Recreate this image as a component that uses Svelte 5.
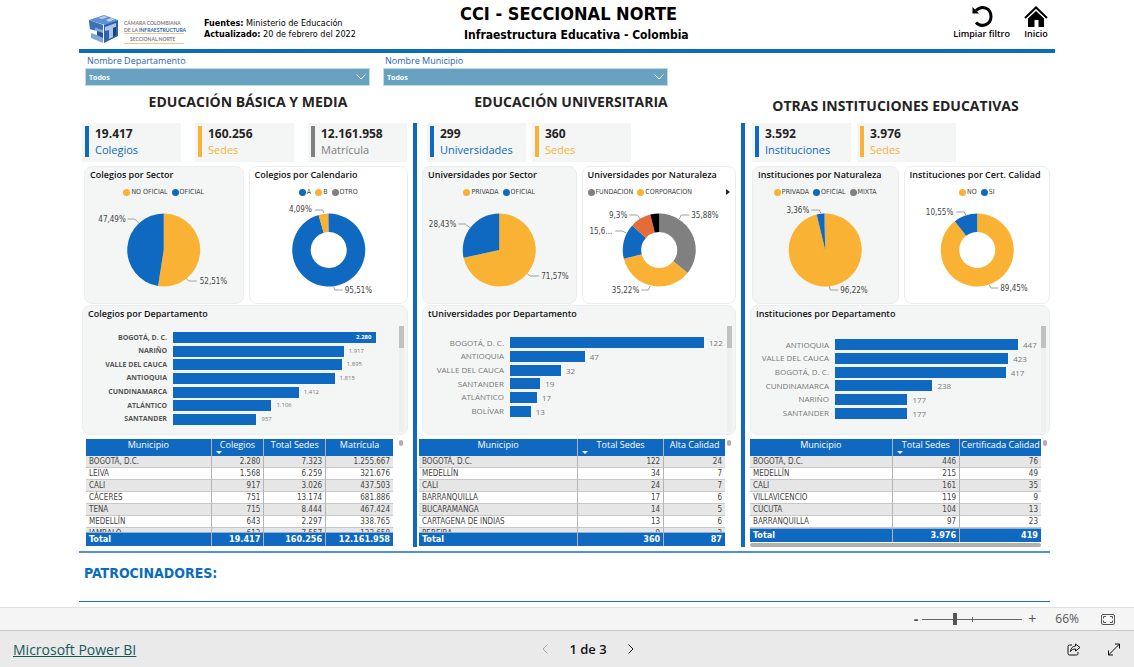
<script lang="ts">
  // Single report page: three education levels side by side, each with
  // its KPIs, two share charts, a department ranking and a town table.

  type Slice = { name: string; value: number; color: string };
  type Callout = { text: string; x: number; y: number; side: 'left' | 'right'; line: string };
  type Share = {
    title: string;
    donut: boolean;
    slices: Slice[];
    legend: number;
    callouts: Callout[];
  };

  const BLUE = '#0f69c0';
  const GOLD = '#f9b233';
  const GRAY = '#808080';

  // Town rows that fit the table before the total covers the next one.
  const FULL_ROWS = 6;

  const filters = [
    { id: 'departamento', label: 'Nombre Departamento' },
    { id: 'municipio', label: 'Nombre Municipio' },
  ];

  const sections = [
    {
      id: 'basica',
      title: 'EDUCACIÓN BÁSICA Y MEDIA',
      kpis: [
        { value: '19.417', label: 'Colegios', color: BLUE },
        { value: '160.256', label: 'Sedes', color: GOLD },
        { value: '12.161.958', label: 'Matrícula', color: GRAY },
      ],
      shares: [
        {
          title: 'Colegios por Sector',
          donut: false,
          legend: 2,
          slices: [
            { name: 'NO OFICIAL', value: 52.51, color: GOLD },
            { name: 'OFICIAL', value: 47.49, color: BLUE },
          ],
          callouts: [
            { text: '47,49%', x: -38, y: -31, side: 'left', line: '-36,-31 -29,-31 -25,-27' },
            { text: '52,51%', x: 36, y: 31, side: 'right', line: '22,28 25,31 33,31' },
          ],
        },
        {
          title: 'Colegios por Calendario',
          donut: true,
          legend: 3,
          slices: [
            { name: 'A', value: 95.51, color: BLUE },
            { name: 'B', value: 4.09, color: GOLD },
            { name: 'OTRO', value: 0.4, color: GRAY },
          ],
          callouts: [
            { text: '4,09%', x: -17, y: -41, side: 'left', line: '-14,-40 -6,-40 -5,-37' },
            { text: '95,51%', x: 16, y: 40, side: 'right', line: '5,37 6,40 14,40' },
          ],
        },
      ] as Share[],
      ranking: {
        title: 'Colegios por Departamento',
        rows: [
          ['BOGOTÁ, D. C.', 2280, '2.280'],
          ['NARIÑO', 1917, '1.917'],
          ['VALLE DEL CAUCA', 1895, '1.895'],
          ['ANTIOQUIA', 1815, '1.815'],
          ['CUNDINAMARCA', 1412, '1.412'],
          ['ATLÁNTICO', 1106, '1.106'],
          ['SANTANDER', 937, '937'],
        ] as [string, number, string][],
      },
      table: {
        head: ['Municipio', 'Colegios', 'Total Sedes', 'Matrícula'],
        widths: [41, 17, 20, 22],
        rows: [
          ['BOGOTÁ, D.C.', '2.280', '7.323', '1.255.667'],
          ['LEIVA', '1.568', '6.259', '321.676'],
          ['CALI', '917', '3.026', '437.503'],
          ['CÁCERES', '751', '13.174', '681.886'],
          ['TENA', '715', '8.444', '467.424'],
          ['MEDELLÍN', '643', '2.297', '338.765'],
          ['JAMBALÓ', '613', '7.557', '133.658'],
        ],
        total: ['Total', '19.417', '160.256', '12.161.958'],
      },
    },
    {
      id: 'universitaria',
      title: 'EDUCACIÓN UNIVERSITARIA',
      kpis: [
        { value: '299', label: 'Universidades', color: BLUE },
        { value: '360', label: 'Sedes', color: GOLD },
      ],
      shares: [
        {
          title: 'Universidades por Sector',
          donut: false,
          legend: 2,
          slices: [
            { name: 'PRIVADA', value: 71.57, color: GOLD },
            { name: 'OFICIAL', value: 28.43, color: BLUE },
          ],
          callouts: [
            { text: '28,43%', x: -43, y: -26, side: 'left', line: '-41,-26 -34,-26 -29,-22' },
            { text: '71,57%', x: 42, y: 26, side: 'right', line: '28,24 31,26 40,26' },
          ],
        },
        {
          title: 'Universidades por Naturaleza',
          donut: true,
          legend: 2,
          slices: [
            { name: 'FUNDACION', value: 35.88, color: GRAY },
            { name: 'CORPORACION', value: 35.22, color: GOLD },
            { name: 'NACIONAL', value: 15.65, color: BLUE },
            { name: 'DEPARTAMENTAL', value: 9.3, color: '#e66c37' },
            { name: 'MUNICIPAL', value: 3.95, color: '#000' },
          ],
          callouts: [
            { text: '9,3%', x: -32, y: -35, side: 'left', line: '-30,-35 -22,-35 -19,-31' },
            { text: '15,6...', x: -47, y: -19, side: 'left', line: '-44,-19 -37,-19 -33,-17' },
            { text: '35,88%', x: 32, y: -35, side: 'right', line: '20,-31 22,-35 30,-35' },
            { text: '35,22%', x: -20, y: 40, side: 'left', line: '-18,40 -11,40 -9,36' },
          ],
        },
      ] as Share[],
      ranking: {
        title: 'tUniversidades por Departamento',
        rows: [
          ['BOGOTÁ, D. C.', 122, '122'],
          ['ANTIOQUIA', 47, '47'],
          ['VALLE DEL CAUCA', 32, '32'],
          ['SANTANDER', 19, '19'],
          ['ATLÁNTICO', 17, '17'],
          ['BOLÍVAR', 13, '13'],
        ] as [string, number, string][],
      },
      table: {
        head: ['Municipio', 'Total Sedes', 'Alta Calidad'],
        widths: [52, 28, 20],
        rows: [
          ['BOGOTÁ, D.C.', '122', '24'],
          ['MEDELLÍN', '34', '7'],
          ['CALI', '24', '7'],
          ['BARRANQUILLA', '17', '6'],
          ['BUCARAMANGA', '14', '5'],
          ['CARTAGENA DE INDIAS', '13', '6'],
          ['PEREIRA', '9', '3'],
        ],
        total: ['Total', '360', '87'],
      },
    },
    {
      id: 'otras',
      title: 'OTRAS INSTITUCIONES EDUCATIVAS',
      kpis: [
        { value: '3.592', label: 'Instituciones', color: BLUE },
        { value: '3.976', label: 'Sedes', color: GOLD },
      ],
      shares: [
        {
          title: 'Instituciones por Naturaleza',
          donut: false,
          legend: 3,
          slices: [
            { name: 'PRIVADA', value: 96.22, color: GOLD },
            { name: 'OFICIAL', value: 3.36, color: BLUE },
            { name: 'MIXTA', value: 0.42, color: GRAY },
          ],
          callouts: [
            { text: '3,36%', x: -16, y: -40, side: 'left', line: '-14,-40 -6,-40 -4,-36' },
            { text: '96,22%', x: 15, y: 40, side: 'right', line: '4,36 5,40 13,40' },
          ],
        },
        {
          title: 'Instituciones por Cert. Calidad',
          donut: true,
          legend: 2,
          slices: [
            { name: 'NO', value: 89.45, color: GOLD },
            { name: 'SI', value: 10.55, color: BLUE },
          ],
          callouts: [
            { text: '10,55%', x: -24, y: -38, side: 'left', line: '-21,-38 -13,-38 -11,-34' },
            { text: '89,45%', x: 23, y: 38, side: 'right', line: '12,35 14,38 21,38' },
          ],
        },
      ] as Share[],
      ranking: {
        title: 'Instituciones por Departamento',
        rows: [
          ['ANTIOQUIA', 447, '447'],
          ['VALLE DEL CAUCA', 423, '423'],
          ['BOGOTÁ, D. C.', 417, '417'],
          ['CUNDINAMARCA', 238, '238'],
          ['NARIÑO', 177, '177'],
          ['SANTANDER', 177, '177'],
        ] as [string, number, string][],
      },
      table: {
        head: ['Municipio', 'Total Sedes', 'Certificada Calidad'],
        widths: [49, 23, 28],
        rows: [
          ['BOGOTÁ, D.C.', '446', '76'],
          ['MEDELLÍN', '215', '49'],
          ['CALI', '161', '35'],
          ['VILLAVICENCIO', '119', '9'],
          ['CÚCUTA', '104', '13'],
          ['BARRANQUILLA', '97', '23'],
        ],
        total: ['Total', '3.976', '419'],
      },
    },
  ];

  let zoom = $state(66);
  let page = $state(1);

  // Clockwise wedges from twelve o'clock, with a hole when inner > 0.
  function wedges(share: Share) {
    const outer = 36.5;
    const inner = share.donut ? 18 : 0;
    const point = (r: number, turn: number) => {
      const a = turn * 2 * Math.PI;
      return `${(r * Math.sin(a)).toFixed(2)} ${(-r * Math.cos(a)).toFixed(2)}`;
    };
    let from = 0;
    return share.slices.map((s) => {
      const to = from + s.value / 100;
      const large = to - from > 0.5 ? 1 : 0;
      const d =
        `M${point(outer, from)}A${outer} ${outer} 0 ${large} 1 ${point(outer, to)}` +
        (inner
          ? `L${point(inner, to)}A${inner} ${inner} 0 ${large} 0 ${point(inner, from)}Z`
          : 'L0 0Z');
      from = to;
      return { d, color: s.color };
    });
  }
</script>

<div class="viewer">
  <main class="report">
    <header class="header">
      <svg class="logo" viewBox="0 0 98 32" role="img" aria-label="Cámara Colombiana de la Infraestructura">
        <path d="M1 6 16 1l14 5-13 5z" fill="#5f90d2" />
        <path d="M1 6l14 5v18L3 24v-5l6 2v-4l-7-2z" fill="#7ea8dd" />
        <path d="M1 6l14 5v5L7 13.500v3L2 15z" fill="#3c70b8" />
        <path d="M16 11 30 6v16l-14 7z" fill="#2f62ab" />
        <path d="M17 13l11-4v4l-3 1v9l-4 2v-9l-4 1z" fill="#a9c6ea" />
        <path d="M25 14l3-1v8l-3 2z" fill="#1d437c" />
        <path d="M10 4l6-2 4 1-6 2zM18 6l5-2 4 1-6 3z" fill="#b9d1ee" />
        <path d="M9 17l6 2v5l-6-3z" fill="#24549b" />
        <path d="M36 19.500h60M36 29.500h60" stroke="#f0c78a" />
        <text x="36" y="11" fill="#7d8083">CÁMARA COLOMBIANA</text>
        <text x="36" y="18" fill="#7d8083">DE LA <tspan fill="#1f65b3">INFRAESTRUCTURA</tspan></text>
        <text x="42" y="27" fill="#7d8083">SECCIONAL NORTE</text>
      </svg>
      <p class="sources">
        <b>Fuentes:</b> Ministerio de Educación<br />
        <b>Actualizado:</b> 20 de febrero del 2022
      </p>
      <div class="heading">
        <h1>CCI - SECCIONAL NORTE</h1>
        <p>Infraestructura Educativa - Colombia</p>
      </div>
      <nav class="actions">
        <button type="button">
          <svg width="22" height="23" viewBox="0 0 22 23" fill="none">
            <path d="M5 5.500C11-.5 20 3 20 11.500c0 8.500-10 11.500-15 6" stroke="#000" stroke-width="3" />
            <path d="M1.500 2v6.500H8z" fill="#000" />
          </svg>
          Limpiar filtro
        </button>
        <button type="button">
          <svg width="24" height="23" viewBox="0 0 24 23">
            <path d="M1 13 12 2.500 23 13" fill="none" stroke="#000" stroke-width="2" />
            <path d="M4 13.500 12 6l8 7.500V22h-5.500v-7h-4v7H4z" />
          </svg>
          Inicio
        </button>
      </nav>
    </header>

    <form class="filters">
      {#each filters as filter}
        <div class="filter">
          <label for={filter.id}>{filter.label}</label>
          <div class="filter__box">
            <select id={filter.id}><option>Todos</option></select>
            <svg width="10" height="6" viewBox="0 0 10 6"><path d="M.5.5 5 5 9.500.5" /></svg>
          </div>
        </div>
      {/each}
    </form>

    <div class="columns">
      {#each sections as section}
        {@const max = section.ranking.rows[0][1]}
        <section class="column column--{section.id}">
          <h2>{section.title}</h2>
          <div class="column__body">
            <div class="kpis">
              {#each section.kpis as kpi}
                <div class="kpi" style="--accent: {kpi.color}">
                  <strong>{kpi.value}</strong>
                  <span>{kpi.label}</span>
                </div>
              {/each}
            </div>

            <div class="shares">
              {#each section.shares as share}
                <article class="card share" class:share--plain={share.donut}>
                  <h3>{share.title}</h3>
                  <ul class="legend">
                    {#each share.slices.slice(0, share.legend) as slice}
                      <li style="--dot: {slice.color}">{slice.name}</li>
                    {/each}
                    {#if share.legend < share.slices.length}
                      <li class="legend__more"><button type="button" aria-label="Siguiente"></button></li>
                    {/if}
                  </ul>
                  <svg class="pie" viewBox="-60 -50 120 100">
                    {#each wedges(share) as wedge}
                      <path d={wedge.d} fill={wedge.color} />
                    {/each}
                    {#each share.callouts as c}
                      <polyline points={c.line} />
                      <text x={c.x} y={c.y + 3} text-anchor={c.side === 'left' ? 'end' : 'start'}>{c.text}</text>
                    {/each}
                  </svg>
                </article>
              {/each}
            </div>

            <article class="card ranking">
              <h3>{section.ranking.title}</h3>
              <div class="ranking__plot">
                <ol>
                  {#each section.ranking.rows as [name, value, text], i}
                    <li>
                      <span class="ranking__name">{name}</span>
                      <span class="ranking__track">
                        <span class="ranking__bar" style="width: {(value / max) * 100}%"></span>
                        <span class="ranking__value" class:ranking__value--first={i === 0}>{text}</span>
                      </span>
                    </li>
                  {/each}
                </ol>
                <div class="scroll"></div>
              </div>
            </article>

            <div class="towns">
              <div class="towns__main">
                <table>
                  <thead>
                    <tr>
                      {#each section.table.head as name, i}
                        <th style="width: {section.table.widths[i]}%" class:sorted={i === 1}>{name}</th>
                      {/each}
                    </tr>
                  </thead>
                  <tbody>
                    {#each section.table.rows as row, i}
                      <tr class:partial={i >= FULL_ROWS}>
                        {#each row as cell}<td><div>{cell}</div></td>{/each}
                      </tr>
                    {/each}
                  </tbody>
                  <tfoot>
                    <tr>{#each section.table.total as cell}<td>{cell}</td>{/each}</tr>
                  </tfoot>
                </table>
                {#if section.id === 'otras'}<div class="towns__hscroll"></div>{/if}
              </div>
              <div class="towns__vscroll"></div>
            </div>
          </div>
        </section>
      {/each}
    </div>

    <section class="sponsors"><h2>PATROCINADORES:</h2></section>
  </main>

  <div class="zoombar">
    <button type="button" aria-label="Alejar" onclick={() => (zoom -= 10)}><b>-</b></button>
    <div class="zoombar__slider">
      <input type="range" min="10" max="185" aria-label="Zoom" bind:value={zoom} />
    </div>
    <button type="button" aria-label="Acercar" onclick={() => (zoom += 10)}>+</button>
    <output>{zoom}%</output>
    <button type="button" aria-label="Ajustar a la página">
      <svg width="14" height="11" viewBox="0 0 14 11" fill="none" stroke="#555">
        <rect x=".5" y=".5" width="13" height="10" rx="1.500" />
        <path d="M2.500 4.500v-2H5M9 2.500h2.500v2M11.500 6.500v2H9M5 8.500H2.500v-2" />
      </svg>
    </button>
  </div>

  <footer class="statusbar">
    <a href="https://powerbi.microsoft.com">Microsoft Power BI</a>
    <div class="pager">
      <button type="button" aria-label="Página anterior" disabled={page === 1} onclick={() => page--}>
        <svg width="8" height="12" viewBox="0 0 8 12"><path d="M6.500 1.500 2 6l4.500 4.500" /></svg>
      </button>
      <span>{page} de 3</span>
      <button type="button" aria-label="Página siguiente" disabled={page === 3} onclick={() => page++}>
        <svg width="8" height="12" viewBox="0 0 8 12"><path d="M1.500 1.500 6 6l-4.500 4.500" /></svg>
      </button>
    </div>
    <div class="statusbar__tools">
      <button type="button" aria-label="Compartir">
        <svg width="14" height="13" viewBox="0 0 14 13">
          <path d="M5 2H2.500Q1 2 1 3.500v7Q1 12 2.500 12h7q1.500 0 1.500-1.500V9" />
          <path d="M8.500 1 13 4.500 8.500 8V6C6 6 5 6.500 3.500 8.500 4 5 5.500 3.200 8.500 3z" />
        </svg>
      </button>
      <button type="button" aria-label="Pantalla completa">
        <svg width="14" height="13" viewBox="0 0 14 13">
          <path d="M1.500 12 12.500 1M8 1h4.500v4.500M1.500 7.500V12H6" />
        </svg>
      </button>
    </div>
  </footer>
</div>

<style>
  :global(body) {
    background: #fff;
  }

  .viewer {
    --ui: 'Open Sans', 'Noto Sans', sans-serif;
    --tahoma: 'DejaVu Sans Condensed', 'DejaVu Sans', sans-serif;
    --blue: #0f69c0;
    display: flex;
    flex-direction: column;
    min-height: 100vh;
    font-family: var(--ui);
    color: #252423;
  }

  h1,
  h2,
  h3,
  p,
  ul,
  ol {
    margin: 0;
    padding: 0;
    list-style: none;
  }

  button {
    padding: 0;
    border: 0;
    background: none;
    color: inherit;
    font: inherit;
    cursor: pointer;
  }

  .report {
    flex: 1;
    padding: 0 79px;
  }

  /* header */
  .header {
    display: grid;
    grid-template-columns: 116px 256px 1fr auto;
    align-items: start;
    box-sizing: border-box;
    height: 53px;
    padding: 3px 7px 0 9px;
    border-bottom: 4px solid #0b6cba;
  }

  .logo {
    width: 98px;
    height: 32px;
    margin-top: 11px;
    overflow: visible;
  }
  .logo text {
    font: bold 5px Lato, sans-serif;
  }

  .sources {
    margin-top: 15px;
    font: 9px/11px var(--tahoma);
    color: #000;
  }

  .heading {
    font-family: var(--tahoma);
    font-weight: bold;
    color: #000;
  }
  .heading h1 {
    font-size: 18px;
    line-height: 22px;
  }
  .heading p {
    padding-left: 4px;
    font-size: 12px;
    line-height: 20px;
  }

  .actions {
    display: flex;
    gap: 14px;
    padding-top: 2px;
    font: 600 9px/12px var(--ui);
    color: #000;
  }
  .actions button {
    display: flex;
    flex-direction: column;
    align-items: center;
  }

  /* filters */
  .filters {
    display: flex;
    gap: 13px;
    padding-left: 6px;
  }
  .filter {
    flex: 0 1 285px;
  }
  .filter label {
    display: block;
    padding-left: 2px;
    font-size: 9px;
    line-height: 15px;
    color: #2a63b8;
  }
  .filter__box {
    position: relative;
  }
  .filter__box svg {
    position: absolute;
    right: 4px;
    top: 6px;
    fill: none;
    stroke: #fff;
    pointer-events: none;
  }
  .filter select {
    display: block;
    width: 100%;
    height: 18px;
    padding: 0 3px;
    border: 1px solid #c3d9e6;
    border-radius: 0;
    appearance: none;
    background: #69a2c1;
    color: #fff;
    font: bold 7px var(--ui);
  }

  /* columns */
  .columns {
    display: grid;
    grid-template-columns: 334fr 328fr 309fr;
    padding: 8px 0 4px;
    margin-right: 5px;
    border-bottom: 2px solid #4d94d4;
  }
  .column {
    display: flex;
    flex-direction: column;
    min-width: 0;
  }
  .column h2 {
    height: 29px;
    font-size: 14px;
    line-height: 16px;
    text-align: center;
  }
  .column--basica h2 {
    padding-left: 4px;
  }
  .column--universitaria h2 {
    padding-right: 12px;
  }
  .column--otras h2 {
    box-sizing: border-box;
    padding-top: 4px;
  }
  .column__body {
    flex: 1;
    padding: 0 5px 1px;
    border-left: 4px solid var(--blue);
  }
  .column--basica .column__body {
    border-left: 0;
    padding: 0 5px 1px 3px;
  }
  .column--otras .column__body {
    padding-right: 0;
  }

  .kpis {
    display: flex;
    gap: 6px;
    padding-left: 5px;
  }
  .column--basica .kpis {
    gap: 14px;
    padding-left: 0;
  }
  .column--otras .kpis {
    padding-left: 2px;
  }
  .kpi {
    display: flex;
    flex: 0 1 99px;
    flex-direction: column;
    position: relative;
    box-sizing: border-box;
    height: 39px;
    padding: 3px 0 0 13px;
    background: #f4f6f6;
  }
  .kpi::before {
    content: '';
    position: absolute;
    left: 3px;
    top: 3px;
    width: 4px;
    height: 31px;
    background: var(--accent);
  }
  .kpi strong {
    font: bold 12px/16px var(--ui);
  }
  .kpi span {
    font-size: 11px;
    line-height: 15px;
    color: var(--accent);
  }

  .card {
    box-sizing: border-box;
    border: 1px solid #eceeee;
    border-radius: 8px;
    background: #f4f6f6;
  }
  .card h3 {
    padding-left: 5px;
    font-size: 9px;
    font-weight: 600;
    line-height: 16px;
    color: #111;
    white-space: nowrap;
  }

  .shares {
    display: grid;
    grid-template-columns: 1fr 1fr;
    gap: 5px;
    margin-top: 4px;
  }
  .column--basica .shares,
  .column--otras .shares {
    padding-left: 2px;
  }
  .share {
    height: 138px;
    min-width: 0;
  }
  .share--plain {
    background: #fff;
  }

  .legend {
    display: flex;
    justify-content: center;
    gap: 4px;
    height: 10px;
    margin-top: 4px;
    padding: 0 5px;
    font: 7px/10px var(--tahoma);
    color: #444;
  }
  .legend li {
    display: flex;
    align-items: center;
    gap: 1px;
  }
  .legend li:not(.legend__more)::before {
    content: '';
    width: 7px;
    height: 7px;
    border-radius: 50%;
    background: var(--dot);
  }
  .legend__more {
    margin-left: auto;
  }
  .legend__more button {
    border: solid transparent;
    border-width: 3px 0 3px 4px;
    border-left-color: #222;
  }

  .pie {
    display: block;
    width: 100%;
    height: 100px;
    margin-top: 3px;
    overflow: visible;
  }
  .pie text {
    font: 8px var(--tahoma);
    fill: #444;
  }
  .pie polyline {
    fill: none;
    stroke: #a0a0a0;
  }

  /* department ranking */
  .ranking {
    height: 130px;
    margin-top: 1px;
  }
  .ranking__plot {
    display: flex;
    height: 106px;
    margin-top: 4px;
    padding-right: 3px;
  }
  .ranking ol {
    display: grid;
    flex: 1;
    align-content: start;
    grid-auto-rows: 1fr;
    height: 82px;
    padding: 12px 23px 0 0;
  }
  .column--basica .ranking ol {
    height: 95px;
    padding-top: 5px;
  }
  .column--universitaria .ranking ol {
    padding-top: 10px;
  }
  .ranking li {
    display: grid;
    grid-template-columns: 81px 1fr;
    align-items: center;
    gap: 6px;
  }
  .column--basica .ranking li {
    grid-template-columns: 84px 1fr;
  }
  .column--otras .ranking li {
    grid-template-columns: 78px 1fr;
  }
  .ranking__name {
    font-size: 8px;
    line-height: 12px;
    text-align: right;
    white-space: nowrap;
    color: #777;
  }
  .ranking__track {
    display: flex;
    align-items: center;
  }
  .ranking__bar {
    flex: none;
    box-sizing: border-box;
    height: 11px;
    background: var(--blue);
  }
  .ranking__value {
    padding-left: 5px;
    font: 8px/11px var(--ui);
    color: #777;
  }
  .column--basica .ranking__name {
    font-size: 7px;
    font-weight: bold;
    color: #555;
  }
  .column--basica .ranking__value {
    font-size: 6px;
  }
  .column--basica .ranking__value--first {
    margin-left: -25px;
    color: #fff;
    font-weight: bold;
  }

  .scroll {
    width: 5px;
    background: linear-gradient(#c1c1c1 22px, #eeefef 22px);
  }

  /* town tables */
  .towns {
    display: flex;
    gap: 2px;
    height: 107px;
    margin-top: 4px;
  }
  .column--basica .towns {
    gap: 6px;
    padding: 0 5px 0 4px;
  }
  .column--universitaria .towns {
    margin-left: -3px;
    padding-right: 5px;
  }
  .column--otras .towns {
    padding-right: 3px;
  }
  .towns__main {
    flex: 1;
    min-width: 0;
  }
  .towns__hscroll {
    height: 4px;
    margin-top: 1px;
    border-radius: 2px;
    background: #b0b0b0;
  }
  .towns__vscroll {
    width: 4px;
    height: 6px;
    margin-top: 1px;
    border-radius: 2px;
    background: #b0b0b0;
  }

  table {
    width: 100%;
    table-layout: fixed;
    border-collapse: separate;
    border-spacing: 0;
    font: 8px/11px var(--tahoma);
    color: #444;
  }
  th,
  td {
    padding: 0 3px;
    text-align: right;
    white-space: nowrap;
  }
  th:not(:last-child),
  td:not(:last-child) {
    border-right: 1px solid #b3b3b3;
  }
  th {
    position: relative;
    height: 17px;
    padding: 0;
    background: var(--blue);
    color: #fff;
    font: 9px/12px var(--ui);
    text-align: center;
    vertical-align: top;
  }
  .sorted::after {
    content: '';
    position: absolute;
    left: 4px;
    bottom: 2px;
    border: solid transparent;
    border-width: 3px 3px 0;
    border-top-color: #fff;
  }
  td:first-child {
    text-align: left;
  }
  tbody td {
    height: 11px;
    border-bottom: 1px solid #c8c8c8;
  }
  tbody tr:nth-child(odd) {
    background: #e6e6e6;
  }
  .partial td {
    height: 4px;
    border-bottom: 0;
  }
  .partial div {
    height: 4px;
    overflow: hidden;
  }
  tfoot td {
    height: 13px;
    border-top: 1px solid #8fb4dc;
    background: var(--blue);
    color: #fff;
    font-size: 9px;
    font-weight: bold;
  }

  .sponsors {
    height: 48px;
    margin-right: 5px;
    border-bottom: 1px solid #1572bf;
  }
  .sponsors h2 {
    padding: 11px 5px 0;
    font: bold 14px/18px var(--tahoma);
    color: #0b6cba;
  }

  /* viewer chrome */
  .zoombar {
    display: flex;
    align-items: center;
    justify-content: flex-end;
    height: 22px;
    padding-right: 19px;
    border-top: 1px solid #e1e1e1;
    border-bottom: 1px solid #c8c8c8;
    background: #f5f5f5;
    color: #555;
    font-size: 14px;
    line-height: 20px;
  }
  .zoombar__slider {
    display: flex;
    align-items: center;
    width: 100px;
    height: 12px;
    margin: 0 6px 0 4px;
    background: linear-gradient(#666, #666) 50px 4px / 1px 5px no-repeat;
  }
  .zoombar input {
    width: 100%;
    height: 12px;
    margin: 0;
    appearance: none;
    background: linear-gradient(#666, #666) 0 6px / 100% 1px no-repeat;
  }
  .zoombar input::-webkit-slider-thumb {
    width: 4px;
    height: 12px;
    appearance: none;
    background: #555;
  }
  .zoombar output {
    margin: 0 22px 0 19px;
    font-size: 12px;
  }
  .zoombar svg {
    display: block;
  }

  .statusbar {
    display: grid;
    grid-template-columns: 1fr auto 1fr;
    align-items: center;
    height: 36px;
    padding: 0 13px;
    background: #eaeaea;
    font-size: 13px;
    color: #111;
  }
  .statusbar a {
    justify-self: start;
    font-size: 14px;
    color: #15595c;
  }
  .statusbar svg {
    display: block;
    fill: none;
    stroke: #111;
  }
  .pager {
    display: flex;
    align-items: center;
    gap: 20px;
    padding-left: 42px;
    font-weight: 600;
  }
  .pager button:disabled {
    opacity: 0.3;
  }
  .statusbar__tools {
    display: flex;
    justify-content: flex-end;
    gap: 26px;
  }
</style>
